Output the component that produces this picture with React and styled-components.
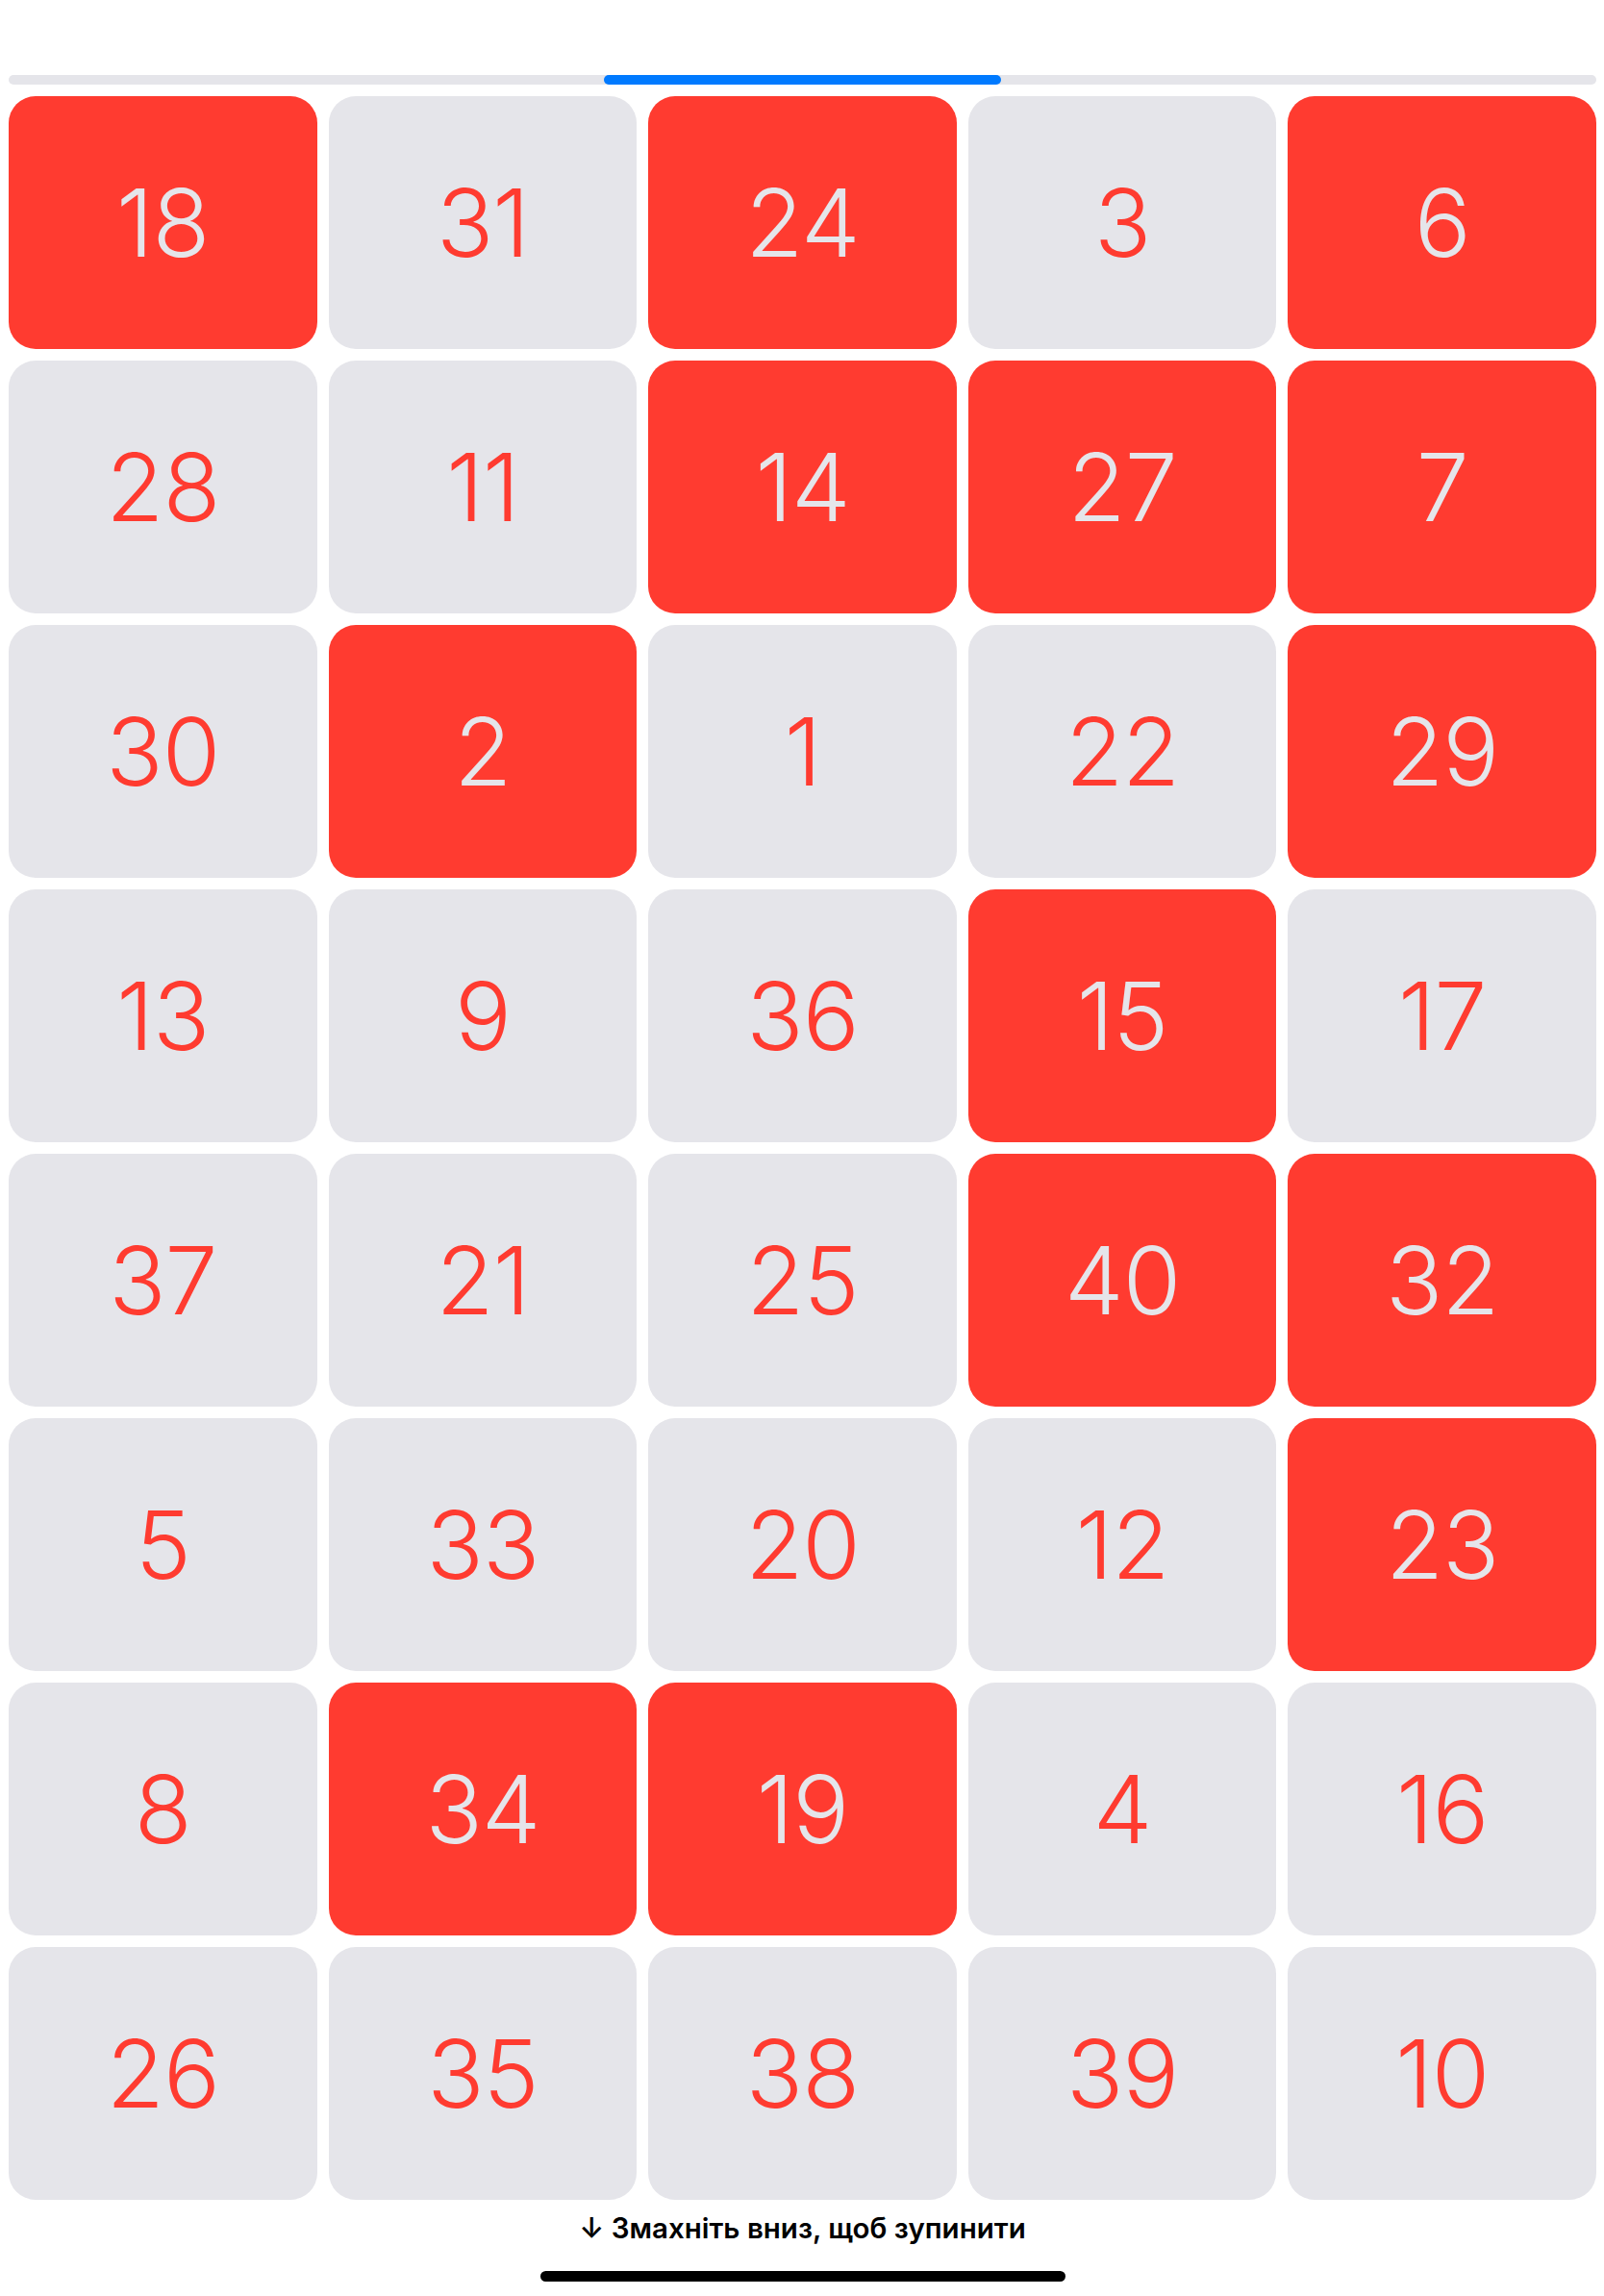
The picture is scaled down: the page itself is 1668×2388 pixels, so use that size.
import styled, { createGlobalStyle } from "styled-components";

const GlobalStyle = createGlobalStyle`
  html, body {
    margin: 0;
    padding: 0;
    background: #fff;
  }
  body {
    font-family: Inter, "Noto Sans", sans-serif;
  }
`;

const Screen = styled.div`
  width: 1668px;
  height: 2388px;
  box-sizing: border-box;
  padding: 78px 8px 0 9px;
  display: flex;
  flex-direction: column;
  background: #fff;
`;

const Progress = styled.div`
  height: 10px;
  border-radius: 5px;
  background: #e5e5ea;
  display: flex;
  margin-bottom: 12px;
`;

const ProgressFill = styled.div`
  height: 100%;
  border-radius: 5px;
  background: #007aff;
`;

const Board = styled.div`
  height: 2188px;
  display: grid;
  grid-template-columns: repeat(5, 1fr);
  grid-template-rows: repeat(8, 1fr);
  gap: 12px;
`;

const Tile = styled.div`
  border-radius: 28px;
  background: ${(p) => (p.$hot ? "#ff3b30" : "#e5e5ea")};
  color: ${(p) => (p.$hot ? "#e5e5ea" : "#ff3b30")};
  display: flex;
  align-items: center;
  justify-content: center;
  font-family: Inter, "Noto Sans", sans-serif;
  font-size: 98px;
  font-weight: 350;
  letter-spacing: -1px;
`;

const Hint = styled.div`
  margin-top: 12px;
  height: 34px;
  line-height: 34px;
  text-align: center;
  font-family: Inter, "Noto Sans", sans-serif;
  font-size: 29.5px;
  font-weight: 600;
  color: #000;
`;

const HomeBar = styled.div`
  align-self: center;
  margin-top: 28px;
  width: 546px;
  height: 11px;
  border-radius: 6px;
  background: #000;
`;

const cells = [
  [18, 1], [31, 0], [24, 1], [3, 0], [6, 1],
  [28, 0], [11, 0], [14, 1], [27, 1], [7, 1],
  [30, 0], [2, 1], [1, 0], [22, 0], [29, 1],
  [13, 0], [9, 0], [36, 0], [15, 1], [17, 0],
  [37, 0], [21, 0], [25, 0], [40, 1], [32, 1],
  [5, 0], [33, 0], [20, 0], [12, 0], [23, 1],
  [8, 0], [34, 1], [19, 1], [4, 0], [16, 0],
  [26, 0], [35, 0], [38, 0], [39, 0], [10, 0],
];

const App = () => {
  return (
    <>
      <GlobalStyle />
      <Screen>
        <Progress>
          <div style={{ width: 619 }} />
          <ProgressFill style={{ width: 413 }} />
        </Progress>
        <Board>
          {cells.map(([n, hot]) => (
            <Tile key={n} $hot={!!hot}>
              {n}
            </Tile>
          ))}
        </Board>
        <Hint>↓ Змахніть вниз, щоб зупинити</Hint>
        <HomeBar />
      </Screen>
    </>
  );
};

export default App;
